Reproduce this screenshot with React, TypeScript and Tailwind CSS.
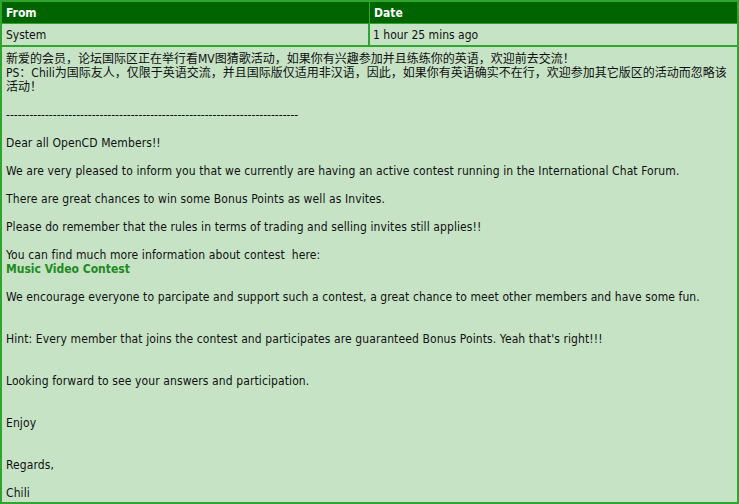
export default function App() {
  const font = {
    fontFamily: '"DejaVu Sans Condensed", "DejaVu Sans", "Noto Sans CJK SC", sans-serif',
  };
  return (
    <div
      className="w-[739px] h-[504px] bg-[#c6e3c6] text-[12px] text-[#111] overflow-hidden"
      style={font}
    >
      <div className="border-2 border-[#2ea62e] h-full flex flex-col">
        {/* header */}
        <div className="flex h-[22px] bg-[#006400] text-white font-bold leading-[22px] border-b border-[#2ea62e]">
          <div className="w-[368px] pl-[4px] border-r border-[#2ea62e]">From</div>
          <div className="flex-1 pl-[4px]">Date</div>
        </div>
        {/* meta row */}
        <div className="flex h-[23px] leading-[23px] border-b-2 border-[#2ea62e]">
          <div className="w-[368px] pl-[4px] border-r-2 border-[#2ea62e]">System</div>
          <div className="flex-1 pl-[3px]">1 hour 25 mins ago</div>
        </div>
        {/* message body */}
        <div className="flex-1 pl-[4px] pt-[5px] leading-[14px]">
          <div className="whitespace-nowrap">
            新爱的会员，论坛国际区正在举行看MV图猜歌活动，如果你有兴趣参加并且练练你的英语，欢迎前去交流！
          </div>
          <div className="whitespace-nowrap">
            PS：Chili为国际友人，仅限于英语交流，并且国际版仅适用非汉语，因此，如果你有英语确实不在行，欢迎参加其它版区的活动而忽略该
          </div>
          <div>活动！</div>
          <div className="mt-[14px]">---------------------------------------------------------------------------</div>
          <div className="tracking-[0.1px]">
            <div className="mt-[14px]">Dear all OpenCD Members!!</div>
            <div className="mt-[14px] whitespace-nowrap">
              We are very pleased to inform you that we currently are having an active contest running in the International Chat Forum.
            </div>
            <div className="mt-[14px]">There are great chances to win some Bonus Points as well as Invites.</div>
            <div className="mt-[14px]">Please do remember that the rules in terms of trading and selling invites still applies!!</div>
            <div className="mt-[14px]">You can find much more information about contest&nbsp; here:</div>
            <a className="block font-bold text-[#1f8a1f] tracking-normal">Music Video Contest</a>
            <div className="mt-[14px] whitespace-nowrap">
              We encourage everyone to parcipate and support such a contest, a great chance to meet other members and have some fun.
            </div>
            <div className="mt-[28px]">
              Hint: Every member that joins the contest and participates are guaranteed Bonus Points. Yeah that's right!!!
            </div>
            <div className="mt-[28px]">Looking forward to see your answers and participation.</div>
            <div className="mt-[28px]">Enjoy</div>
            <div className="mt-[28px]">Regards,</div>
            <div className="mt-[14px]">Chili</div>
          </div>
        </div>
      </div>
    </div>
  );
}
